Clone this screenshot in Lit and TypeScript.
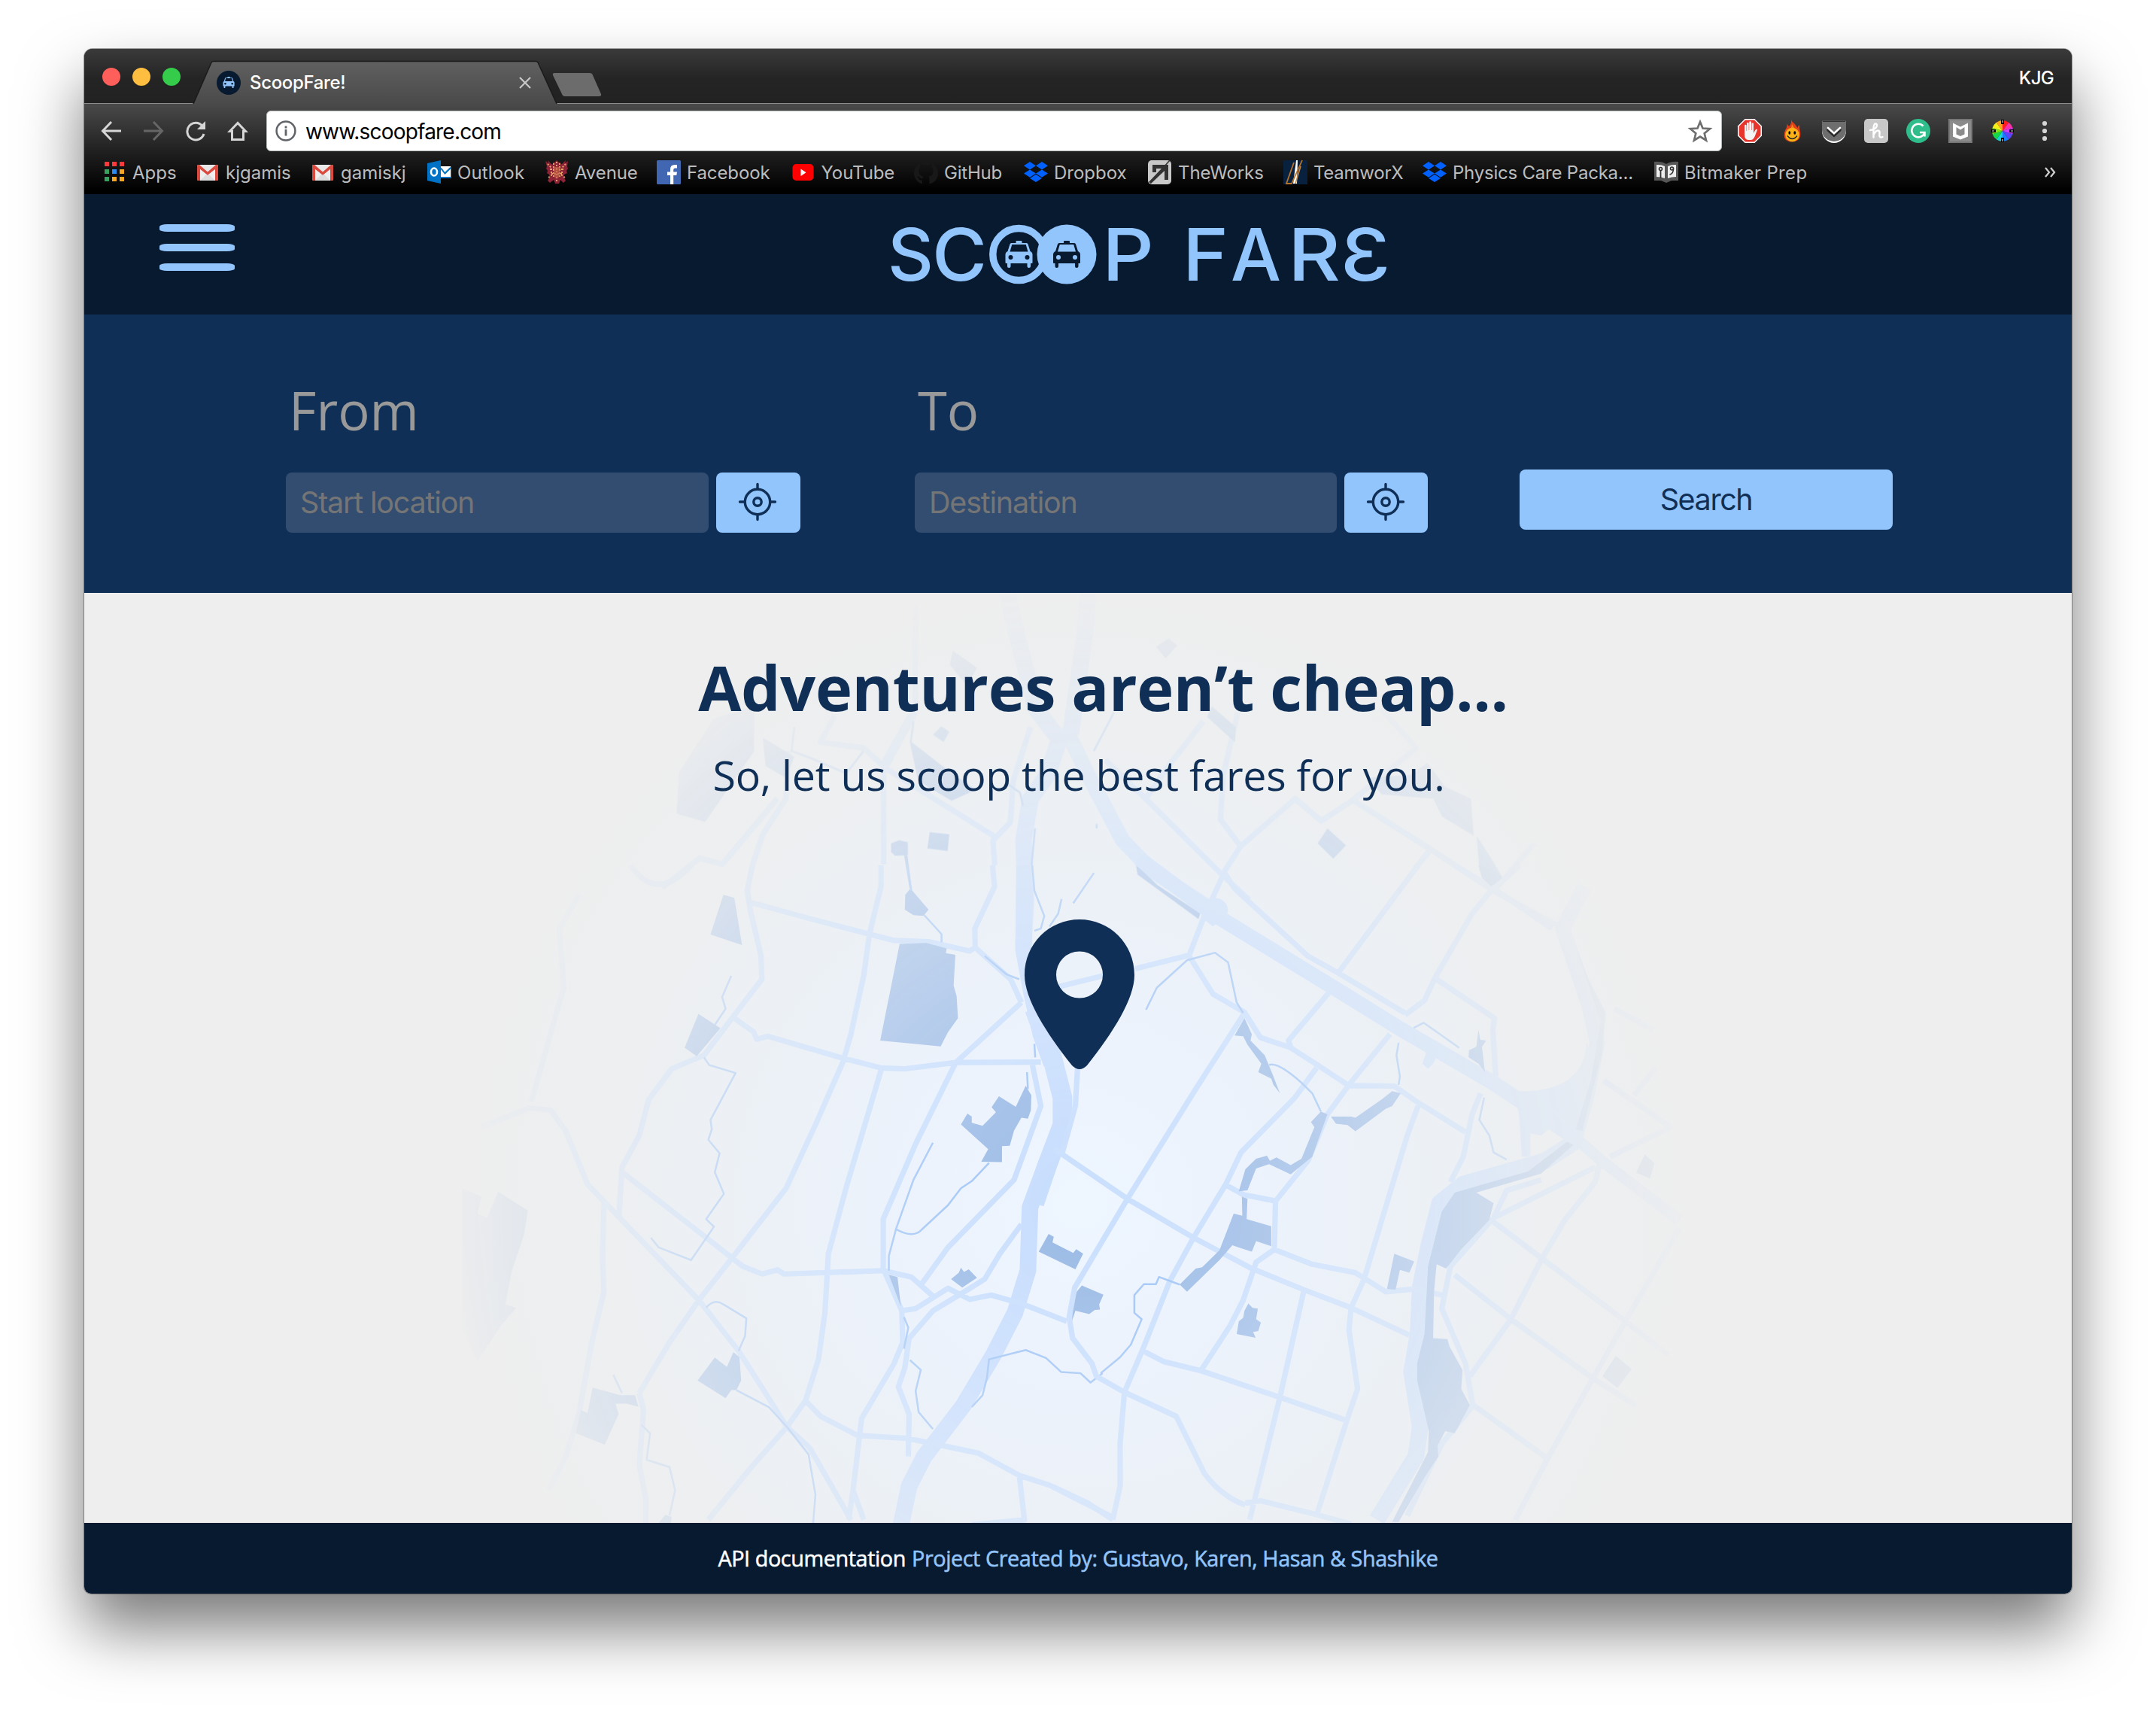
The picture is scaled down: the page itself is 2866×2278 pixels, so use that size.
import { LitElement, html, svg, css } from "lit";
import { customElement } from "lit/decorators.js";

const taxi = (body: string, glass: string) => svg`
  <path fill=${body} d="M14 3V1q0-1 1-1h6q1 0 1 1v2h6q1.600 0 2 1.500L33 14q3 1 3 4.500V29q0 1-1 1h-1.500v4q0 2-2.250 2T29 34v-4H7v4q0 2-2.250 2T2.500 34v-4H1q-1 0-1-1V18.500Q0 15 3 14L6 4.500Q6.400 3 8 3z"/>
  <path fill=${glass} d="M8.800 5h18.400L30 14.500H6z"/>
  <ellipse cx="7" cy="22" rx="3" ry="2.900" fill=${glass}/>
  <ellipse cx="29" cy="22" rx="3" ry="2.900" fill=${glass}/>`;

const dropbox = svg`<path fill="#0061ff" d="M8 2l8 5.200-8 5.200-8-5.200zM24 2l8 5.200-8 5.200-8-5.200zM8 12.400l8 5.200-8 5.200-8-5.200zM24 12.400l8 5.200-8 5.200-8-5.200zM16 18.800l8 5.200-8 5-8-5z"/>`;

const gmail = svg`
  <rect x="2" y="6" width="28" height="21" rx="2" fill="#e8e8e8"/>
  <path d="M6 27 16 18 26 27z" fill="#d4d4d4"/>
  <path d="M2 8v17q0 2 2 2h2V12l10 8 10-8v15h2q2 0 2-2V8q0-2-2-2h-1L16 15.500 5 6H4Q2 6 2 8z" fill="#db4a3f"/>
  <path d="M6 12v15h20V12l-10 8z" fill="#eee"/>
  <path d="M6 27 14 19l2 1.500 2-1.500 8 8z" fill="#ddd"/>`;

interface Bookmark { label: string; width: number; space: number; icon: unknown; }

const bookmarks: Bookmark[] = [
  { label: "Apps", width: 124, space: 0, icon: svg`
    <g><path fill="#fb3b3b" d="M3 2h6v6H3zM13 2h6v6h-6zM23 2h6v6h-6z"/>
    <path fill="#39a160" d="M3 12h6v6H3zM3 22h6v6H3z"/><path fill="#2a8cf2" d="M13 12h6v6h-6z"/>
    <path fill="#f5a623" d="M23 12h6v6h-6zM13 22h6v6h-6zM23 22h6v6h-6z"/></g>` },
  { label: "kjgamis", width: 153, space: 0, icon: gmail },
  { label: "gamiskj", width: 155, space: 0, icon: gmail },
  { label: "Outlook", width: 156, space: 0.15, icon: svg`
    <rect x="15" y="8" width="16" height="15" fill="#fff"/><path d="M17 10l7 5 8-7v16H17z" fill="#0072c6"/>
    <path d="M17 9h13l-6.500 6z" fill="#fff"/><path d="M18 9.500l6 5.500 7-6v13H18z" fill="#fff"/>
    <path d="M18 10.500l5.500 7L31 10" stroke="#0072c6" stroke-width="2" fill="none"/>
    <path d="M0 4 18 0v31L0 27z" fill="#0072c6"/><ellipse cx="9" cy="15.500" rx="4" ry="5" fill="none" stroke="#fff" stroke-width="2.600"/>` },
  { label: "Avenue", width: 149, space: -0.1, icon: svg`
    <path fill="#8e2236" d="M1 1l4 3-1-4 5 5 3 1-1-4 2 1 3-3 3 3 2-1-1 4 3-1 5-5-1 4 4-3-1 7 1 3-2 3 1 3-4 2-1 3 3 5-3 3-4-4-2 5h-5l-2-5-5 4-3-3 3-5-1-3-3-2 1-3-2-3 1-3z"/>
    <path stroke="#e2a06a" stroke-width="2" stroke-dasharray="2 2" fill="none" d="M4 5l5 5v10l-5 4M28 5l-5 5v10l5 4M12 4v20M20 4v20M16 2v28M7 12h18M9 18h14"/>
    <path fill="#c5634a" opacity=".7" d="M12 9h8v12l-4 4-4-4z"/>` },
  { label: "Facebook", width: 178.5, space: -0.1, icon: svg`
    <rect width="32" height="32" rx="1.500" fill="#4267b2"/>
    <path fill="#fff" d="M18 32V20h-4v-4.500h4V12q0-6 6-6h3v4.500h-2.500q-2.300 0-2.300 2.300v2.700H27l-.7 4.500h-4.100v12z"/>` },
  { label: "YouTube", width: 163.5, space: -0.1, icon: svg`
    <rect x="1.500" y="5" width="28" height="22" rx="5" fill="#f00"/><path d="M12.500 11.500v9.500l7-4.700z" fill="#fff"/>` },
  { label: "GitHub", width: 146, space: -0.2, icon: svg`
    <path fill="#181818" d="M16 1.500C7.500 1.500 0 8 0 17c0 7 4.500 12.500 11 14.500v-5c-3 .5-4.500-1-5.500-3.500l-1.500-2c2-.2 3 1 3.800 2.300 1 1.400 2.200 1.400 3.700.7.200-1.200.8-2 1.500-2.500-4-.5-6.500-2.500-6.500-7.500 0-2 .6-3.500 1.800-4.800-.3-1.200-.3-3 .3-4.600 1.600 0 3 .8 4.400 2q3-1 6 0c1.400-1.200 2.800-2 4.400-2 .6 1.600.6 3.400.3 4.600 1.200 1.300 1.800 2.800 1.800 4.800 0 5-2.500 7-6.500 7.500 1 .8 1.500 2 1.500 3.700v6.300C27.500 29.500 32 24 32 17c0-9-7.500-15.500-16-15.500z"/>` },
  { label: "Dropbox", width: 165, space: 0, icon: dropbox },
  { label: "TheWorks", width: 180, space: -0.1, icon: svg`
    <rect width="31" height="32" rx="5" fill="#c9c9c9"/><path d="M6 6h21v20h-5V14L4 31 1 29 18 11H11v5H6z" fill="#333"/><path d="M29 0 22 8" stroke="#333" stroke-width="1.500"/>` },
  { label: "TeamworX", width: 185, space: -0.25, icon: svg`
    <rect width="32" height="32" fill="#08213f"/><path d="M17 0 13 31h5l1-31z" fill="#fff"/>
    <path d="M14 3 4 31h7L25 0" fill="none" stroke="#b8742a" stroke-width="1.800"/><path d="M23 8 16 31" stroke="#c58a45" stroke-width="1.500"/>` },
  { label: "Physics Care Packa...", width: 308, space: -0.22, icon: dropbox },
  { label: "Bitmaker Prep", width: 300, space: 0.35, icon: svg`
    <path fill="#565656" d="M0 2q9-1 16 3 7-4 16-3v25h-9l-7 3-7-3H0z"/>
    <path fill="#eee" d="M3 6q6-.5 11 2v16q-5-2-11-2zM29 6q-6-.5-11 2v16q5-2 11-2z"/>
    <circle cx="8.500" cy="11.500" r="2" fill="none" stroke="#333" stroke-width="1.600"/><path d="M8.500 14v10" stroke="#333" stroke-width="1.800"/>
    <circle cx="23.500" cy="11" r="2" fill="none" stroke="#333" stroke-width="1.600"/><path d="M25.500 11q0 7-5 8" fill="none" stroke="#333" stroke-width="1.600"/>` },
];

const extensions = [
  svg`<path d="M9.500 0h13L32 9.500v13L22.500 32h-13L0 22.500v-13z" fill="#fff"/>
    <path d="M10 1.500h12l8.500 8.500v12L22 30.500H10L1.500 22V10z" fill="#e8352c"/>
    <path fill="#f4f4f4" d="M9 9q0-1.300 1.300-1.300T11.600 9v7h.5V6q0-1.300 1.300-1.300T14.700 6v9h.5V4.600q0-1.300 1.400-1.300T18 4.600V15h.5V6.500q0-1.300 1.200-1.300T21 6.500V19l2.200-4q1.500-2 3-1l-3.400 9q-2 5-5.500 5h-3Q9 28 9 21z"/>`,
  svg`<path fill="#e2401b" d="M15 1q1 5-3 9-2-2-2.500-4 .5 5-2.500 9-5 15 9 15.500Q29 30 27 17q-1-4-1-9-2 1-2.500 4Q21 8 19 6 16 4 15 1z"/>
    <path fill="#f58a1f" d="M16 7q0 5-5 10l10 1q-1-5-5-11z"/>
    <circle cx="16.500" cy="21" r="9.300" fill="#fbb118"/><ellipse cx="12.800" cy="18.500" rx="1.400" ry="2.200"/><ellipse cx="19.800" cy="18.500" rx="1.400" ry="2.200"/>
    <path d="M10 22.500q6.500 8 13 0" fill="none" stroke="#222" stroke-width="1.300"/>`,
  svg`<path d="M2 3h28q2 0 2 2v11a16 16 0 0 1-32 0V5q0-2 2-2z" fill="#fff"/><path d="M2 2h28q2 0 2 2v11a16 15 0 0 1-32 0V4q0-2 2-2z" fill="#6e6e6e"/>
    <path d="M1 3.300h30" stroke="#333" stroke-width="1.500"/><path d="M8.500 14.500l7.500 7 7.500-7" fill="none" stroke="#2a2a2a" stroke-width="4.500" stroke-linecap="round"/><path d="M8 12l8 7.300L24 12" fill="none" stroke="#fff" stroke-width="2.600" stroke-linecap="round"/>`,
  svg`<rect width="32" height="32" rx="5" fill="#c8c8c8"/><path d="M8 15q8-1 9-6 0-3-2.500-2.500Q12 8 12.500 18v6.500M12.700 21q3-6 6-5.500 2.500.5 1.800 4.500-1 6 4 4" fill="none" stroke="#fff" stroke-width="2.400" stroke-linecap="round"/>`,
  svg`<circle cx="16" cy="16" r="16" fill="#2fbd8b"/><path d="M22.500 9.500A8.800 8.800 0 1 0 24 19.500M18 18h6.500v5.500" fill="none" stroke="#fff" stroke-width="2.600"/>`,
  svg`<rect width="32" height="32" fill="#777"/><rect x="2" y="2" width="28" height="28" fill="#8b8b8b"/><path d="M6 5.500l10 5 10-5v18l-10 4-10-4zM10.500 11v9.500L16 23l5.500-2.500V11L16 14.500z" fill="#fff" fill-rule="evenodd"/>`,
];

const wheel = ["#ff1d1d", "#ff2fa8", "#d23cff", "#5a46ff", "#1a7bff", "#12d6d0", "#16d94a", "#7be814", "#f5ef19", "#ffa51c"];
const slice = (i: number) => {
  const a = (i * 36 - 90) * Math.PI / 180, b = ((i + 1) * 36 - 90) * Math.PI / 180;
  return `M16 16L${16 + 14 * Math.cos(a)} ${16 + 14 * Math.sin(a)}A14 14 0 0 1 ${16 + 14 * Math.cos(b)} ${16 + 14 * Math.sin(b)}z`;
};

const crosshair = html`<svg viewBox="-26 -26 52 52" width="52" height="52">
  <g fill="none" stroke="#0f2f57" stroke-width="3.400" stroke-linecap="round">
    <circle r="16.700"/><circle r="5.200"/><path d="M0-17v-6.500M0 17v6.500M-17 0h-6.500M17 0h6.500"/>
  </g></svg>`;

@customElement("browser-chrome")
export class BrowserChrome extends LitElement {
  static styles = css`
    :host { display: block; height: 193px; font-family: Inter, "Liberation Sans", sans-serif; background: #000; }
    svg { display: block; flex: none; overflow: visible; }
    .strip { display: flex; height: 72px; box-sizing: border-box; background: linear-gradient(#3a3a3a, #242424 55%, #222); border-top: 0; }
    .lights { display: flex; gap: 16px; padding: 25px 0 0 24px; width: 121px; }
    .light { width: 24px; height: 24px; border-radius: 50%; flex: none; }
    .red { background: #ff5f5a; }
    .amber { background: #ffbe40; }
    .green { background: #35cb4b; }
    .tab { position: relative; width: 483px; height: 57px; margin-top: 16px; display: flex; align-items: center; }
    .shape { position: absolute; left: 0; top: 0; }
    .favicon { position: relative; margin-left: 31px; }
    .title { position: relative; margin-left: 12px; color: #fff; font-size: 24px; letter-spacing: -0.35px; font-weight: 500; width: 361px; }
    .close { position: relative; margin-top: 1px; margin-left: -2px; }
    .plus { margin: 32px 0 0 -6px; }
    .user { margin: 23px 24px 0 auto; color: #fff; font-size: 24px; line-height: 32px; letter-spacing: -0.7px; font-weight: 500; }
    .toolbar { height: 121px; box-sizing: border-box; background: linear-gradient(#4a4a4a, #1e1e1e 55%, #000 96%); border-top: 1px solid #8c8c8c; }
    .nav { display: flex; height: 54px; padding: 9px 0 0 20px; align-items: center; }
    .buttons { display: flex; width: 222px; gap: 24px; align-items: center; }
    .url { display: flex; align-items: center; width: 1935px; height: 54px; box-sizing: border-box; background: #fff; border: 1px solid #b4b8b8; border-radius: 6px; padding-left: 11px; font-size: 28px; letter-spacing: -0.8px; }
    .address { margin: 1px 0 0 12px; flex: 1; }
    .star { margin-right: 10px; }
    .extensions { display: flex; gap: 24px; margin-left: 21px; }
    .dots { margin-left: 36px; }
    .bookmarks { display: flex; padding: 12px 22px 0 24px; height: 32px; align-items: center; color: #bdbdbd; font-size: 24px; }
    .bookmark { display: flex; align-items: center; gap: 8px; white-space: nowrap; flex: none; }
    .more { margin-left: auto; }
  `;

  render() {
    return html`
      <div class="strip">
        <div class="lights"><i class="light red"></i><i class="light amber"></i><i class="light green"></i></div>
        <div class="tab">
          <svg class="shape" width="483" height="57" viewBox="0 0 483 57">
            <defs><linearGradient id="tabfill" x2="0" y2="1"><stop stop-color="#606060"/><stop offset="1" stop-color="#4a4a4a"/></linearGradient></defs>
            <path d="M0 57 24 2Q25 .500 27 .500H455Q457 .500 458 2L483 57z" fill="url(#tabfill)"/>
            <path d="M0 57 24 2Q25 .500 27 .500H455Q457 .500 458 2L483 57" fill="none" stroke="#1a1a1a" stroke-width="1.500"/>
          </svg>
          <svg class="favicon" width="32" height="32" viewBox="-16 -16 32 32"><circle r="16" fill="#081a30"/><g transform="translate(-7.500 -8) scale(.42)">${taxi("#93c5fd", "#081a30")}</g></svg>
          <span class="title">ScoopFare!</span>
          <svg class="close" width="14" height="14" viewBox="0 0 14 14"><path d="M0 0 14 14M14 0 0 14" stroke="#c8c8c8" stroke-width="2.200"/></svg>
        </div>
        <svg class="plus" width="66" height="32" viewBox="0 0 66 32"><path d="M3 0H50Q53 0 54 3L65 28Q66 31 62 31H17Q14 31 13 28L1 3Q0 0 3 0z" fill="#6c6c6c"/></svg>
        <span class="user">KJG</span>
      </div>
      <div class="toolbar">
        <div class="nav">
          <div class="buttons">
            <svg width="32" height="32" viewBox="0 0 32 32"><path d="M29 16H5M16 4 4.500 16 16 28" fill="none" stroke="#d6d6d6" stroke-width="3"/></svg>
            <svg width="32" height="32" viewBox="0 0 32 32"><path d="M3 16H27M16 4 27.500 16 16 28" fill="none" stroke="#666" stroke-width="3"/></svg>
            <svg width="32" height="32" viewBox="0 0 32 32"><path d="M25 9.500A11.300 11.300 0 1 0 27 20" fill="none" stroke="#d6d6d6" stroke-width="3"/><path d="M29 3V14H18z" fill="#d6d6d6"/></svg>
            <svg width="32" height="32" viewBox="0 0 32 32"><path d="M16 5.500 5.500 16.500H8.500V27.500H23.500V16.500H26.500z" fill="none" stroke="#d6d6d6" stroke-width="3"/></svg>
          </div>
          <div class="url">
            <svg width="28" height="28" viewBox="0 0 28 28"><circle cx="14" cy="14" r="12.400" fill="none" stroke="#5f6368" stroke-width="2.500"/><path d="M14 12v8.500M14 7.500v3" stroke="#5f6368" stroke-width="2.800"/></svg>
            <span class="address">www.scoopfare.com</span>
            <svg class="star" width="36" height="32" viewBox="0 0 36 32"><path d="M18 4 21.500 12.500 31 13.200 23.700 19.200 26 28.500 18 23.500 10 28.500 12.300 19.200 5 13.200 14.500 12.500z" fill="none" stroke="#6e6e6e" stroke-width="2.700"/></svg>
          </div>
          <div class="extensions">
            ${extensions.map(e => html`<svg width="32" height="32" viewBox="0 0 32 32">${e}</svg>`)}
            <svg width="32" height="32" viewBox="0 0 32 32">
              ${wheel.map((c, i) => svg`<path d=${slice(i)} fill=${c}/>`)}
              <path d="M16 1v6M16 25v6M1 16h6M25 16h6" stroke="#000" stroke-width="4"/><path d="M16 2v3M16 27v3M2 16h3M27 16h3" stroke="#ddd" stroke-width="1.200"/>
            </svg>
          </div>
          <svg class="dots" width="8" height="28" viewBox="0 0 8 28"><circle cx="4" cy="4" r="3.100" fill="#d6d6d6"/><circle cx="4" cy="14" r="3.100" fill="#d6d6d6"/><circle cx="4" cy="24" r="3.100" fill="#d6d6d6"/></svg>
        </div>
        <div class="bookmarks">
          ${bookmarks.map(b => html`<div class="bookmark" style="width:${b.width}px;letter-spacing:${b.space}px">
            <svg width="32" height="32" viewBox="0 0 32 32">${b.icon}</svg><span>${b.label}</span></div>`)}
          <svg class="more" width="14" height="14" viewBox="0 0 14 14"><path d="M1 1 6 7 1 13M8 1 13 7 8 13" fill="none" stroke="#d0d0d0" stroke-width="2.200"/></svg>
        </div>
      </div>`;
  }
}

@customElement("city-map")
export class CityMap extends LitElement {
  static styles = css`
    :host { display: block; background: radial-gradient(circle 860px at 1323px 812px, #eef6ff 0%, #ecf3fd 22%, #ecf1f7 48%, #edeff1 72%, #eee 100%); }
    svg { display: block; }
    path { vector-effect: non-scaling-stroke; }
    .road { fill: none; stroke: #c8defd; stroke-width: 7.200px; stroke-linejoin: round; }
    .stream { fill: none; stroke: #9dc3f5; stroke-width: 2.500px; stroke-linejoin: round; }
    .river { fill: none; stroke: #c6dcfd; stroke-width: 22px; stroke-linejoin: round; }
    .broad { stroke-width: 26px; }
    .avenue { fill: none; stroke: #c8defd; stroke-width: 20px; stroke-linejoin: round; }
    .slim { stroke-width: 15px; }
    .water { fill: #c8defd; }
    .park { fill: #98b8e4; }
  `;

  render() {
    return html`<svg width="2642" height="1236" viewBox="112 788 2642 1236">
      <defs>
        <radialGradient id="fade" gradientUnits="userSpaceOnUse" cx="1435" cy="1600" r="850">
          <stop stop-color="#fff"/><stop offset=".25" stop-color="#c4c4c4"/><stop offset=".5" stop-color="#808080"/><stop offset=".8" stop-color="#303030"/><stop offset="1" stop-color="#000"/>
        </radialGradient>
        <mask id="vignette" maskUnits="userSpaceOnUse" x="112" y="788" width="2642" height="1236"><rect x="112" y="788" width="2642" height="1236" fill="url(#fade)"/></mask>
      </defs>
      <g mask="url(#vignette)">
        <g transform="translate(880 840) scale(.7653 .3954)" opacity=".88">
          <path class="river" d="M600 -130 615 0 650 260 690 360 670 480 640 560 628 700 632 900 628 1050"/>
          <path class="river" d="M740 -130 735 0 710 340"/>
          <path class="avenue" d="M700 320 740 480 800 700 850 800 960 940"/>
          <path class="road" d="M157 784 175 680 215 560 220 400M385 780V440L440 250V-100M300 280 275 370 350 390 390 460 580 690M390 450 440 270M640 320 610 500 605 640 575 700 578 784M200 560 105 780 65 760 0 860M940 300 880 450 840 560M770 430 840 560 975 820 1020 900M1000 270 975 480 970 630 1005 720 975 810M1005 720 1100 560 1145 635 1200 565 1335 730 1445 870 1568 1000M1200 565 1310 390 1250 260M1335 730 1308 796M1515 710 1445 870"/>
          <path class="park" d="M30 470 25 610 75 638 160 400V250L90 290zM465 673 499 680 496 736 461 727zM398 710 412 700 427 706V750L405 752 398 740zM1156 660 1188 717 1166 762 1139 710zM430 365 500 470 545 530 503 567 445 500zM485 317 499 335 489 369 471 345zM955 250 997 320 995 370 947 285zM505 62 547 120 530 180 500 110zM880 20 895 45 875 88 858 50zM1225 490 1300 480 1330 440 1360 520 1405 560 1410 685 1355 620 1340 560 1250 545zM1415 685 1440 760 1460 825 1442 855 1420 800zM175 355 230 420 215 490 180 450zM420 745h6l8 120-4-5zM823 780 860 850 935 945 932 965 826 815z"/>
          <path class="stream" d="M785 270 750 400M230 320 225 400 260 425 320 475 350 400M432 370 437 300M648 660 642 784M600 510 622 540 627 584M755 645v15"/>
        </g>
        <g transform="translate(580 1150) scale(.574 .5612)">
          <path class="river" d="M1362 0 1360 200 1378 300 1400 400 1425 470"/>
          <path class="river broad" d="M1385 340 1425 450 1450 550V615L1415 710 1385 800"/>
          <path class="river" d="M1415 700 1375 810 1370 960 1340 1060 1290 1160 1220 1280 1130 1400 1095 1470 1075 1568"/>
          <path class="road" d="M732 0 720 60 728 110 752 215 754 270 690 355 620 450 545 482 492 555 470 640 430 715 423 830M728 88 860 125 1003 163 1060 178 1140 181 1235 203 1248 195 1330 270 1355 325M1030 0V50L1003 163 990 260 960 400 942 465 880 610 810 765 685 930 608 1030 540 1130 470 1250M1288 0 1293 50 1247 150 1248 195M690 362 735 395 742 412 768 405 942 457 1030 480 1085 482 1203 467 1400 466M1355 325 1203 467 1110 660 1035 838V955M1030 485 950 760 908 920 900 1060 885 1170 855 1268 812 1330 730 1425 630 1550M428 725 600 862 710 950 755 968 790 958 805 968 1035 960 1100 975 1150 1020M105 620 215 575 265 580 300 630 350 755 420 830 608 1030 700 1150 812 1330 865 1380 960 1550M388 800 385 930 388 1010 360 1130 330 1300 300 1400 260 1480M470 1250 480 1290 470 1420 485 1500V1568M330 70 285 150 295 290 220 560M450 0Q510 90 590 0M1380 470 1400 570 1338 745 1185 905 1125 990M1078 1055 1110 1050 1185 1002 1235 1028 1285 1018 1355 1038 1460 1080M1355 850 1305 920 1270 980 1215 1015 1150 1055 1095 1120 1085 1190 1070 1235 1095 1300 1093 1400M1035 955 1078 1055 1080 1130 1060 1180 985 1310 965 1480 990 1550M965 1480 955 1550M855 1268 890 1305 975 1350 1090 1357 1175 1375 1255 1392 1350 1445 1420 1468 1568 1545M1350 1445 1362 1550 1240 1562M1485 480 1480 570 1450 680"/>
          <path class="park" d="M665 70 690 77 708 189 635 164zM607 352 658 386 603 452 575 432zM1073 186 1135 184 1182 197 1180 208 1202 212 1198 285 1205 310 1208 362 1185 395 1168 429 1028 415zM1098 55 1140 105 1128 120 1105 118 1085 105 1086 70zM1365 522 1378 545 1377 580 1370 600 1355 598 1338 628 1328 664 1310 665V703L1262 702 1278 672 1215 614 1230 588 1240 595V610L1265 617 1296 585 1286 573 1303 547 1342 572zM1418 873 1430 880 1427 893 1475 918 1482 909 1498 920 1480 957 1395 915zM1495 995 1545 1017 1535 1040 1537 1052 1525 1053 1512 1063 1480 1055 1472 1080 1475 1020zM1192 980 1210 965 1215 953 1222 963 1233 957 1252 977 1218 1000zM1048 970 1068 975 1076 1045zM605 1220 645 1166 673 1188 688 1153 702 1165 706 1220 695 1243H683L670 1262zM362 1237 425 1255 460 1255 468 1282 440 1275 415 1275 422 1300 390 1372 323 1345 335 1290 350 1297zM143 773 212 818 203 875 175 960 160 1040 185 1048 150 1090 95 1175 60 1100V765L105 785 95 825 118 835zM530 1538 545 1543 543 1563 515 1558z"/>
          <path class="stream" d="M683 262 662 312 670 340 645 378M620 455 632 473 693 492 635 603 638 625 630 650 656 682 645 727 666 778 625 838 643 856 590 935 515 905 497 882M1150 657 1105 745 1065 860 1048 925V960M1065 862Q1105 885 1125 862L1185 805 1215 765 1240 748 1280 705M1385 423 1387 455M1368 490 1370 530M625 1047Q645 1025 665 1040L718 1073 715 1115 700 1150M695 1243 770 1283 812 1330 862 1395 878 1490 872 1568M410 1207 430 1250M475 1325 495 1345 487 1408 540 1425 553 1480 540 1540M1083 1145 1093 1095 1083 1070M1097 1172 1122 1195 1110 1245 1117 1295 1150 1335M1240 1283 1265 1255 1275 1215 1280 1170 1365 1148 1412 1167 1447 1200 1492 1203 1515 1225 1543 1203M1270 215 1320 258 1350 270M1130 118 1170 163V182M1090 0 1100 60M1380 0 1385 60 1408 120 1400 150 1385 155M1448 80 1440 115 1420 145M1523 18 1475 90"/>
        </g>
        <g transform="translate(1400 1150) scale(.574 .5612)">
          <path class="avenue" d="M200 -15 370 115 650 290 800 385 1010 510 1100 570 1215 650"/>
          <path class="avenue slim" d="M1215 650 1270 700 1450 840"/>
          <path class="avenue" d="M1230 50 1180 150 1200 210 1240 330 1260 420 1235 550 1210 640"/>
          <path class="river" d="M1215 650 1140 700 950 755 895 800 870 900 850 1000 845 1110 830 1200 850 1330 840 1400 750 1550"/>
          <path class="water" d="M1070 535Q1230 540 1235 420L1260 470 1225 650 1180 655 1185 610 1155 575 1175 600 1130 640 1105 635 1105 690 1085 690 1080 600zM855 470 865 440 890 450 880 470 868 482zM345 100a30 28 0 1 1 55 20l-30 25-25-20z"/>
          <path class="road" d="M395 15 420 55 590 215 660 255 815 350M15 287 115 262M190 245 315 213 350 120 395 20M315 215 370 305 443 348 480 408 550 432 615 475 685 522 790 523 845 562 955 632M550 430 545 415 640 300M660 255 845 0M815 355 860 320 885 265 970 115 1010 65 1080 0M930 0 1020 55 1155 150M885 268 1022 362 1018 390 1025 500M780 400 685 520 635 590 590 700 515 795 512 910 470 940 440 1030 410 1090 342 1197M443 350 330 530 172 790 50 1000 37 1070 45 1120 90 1180 100 1210 165 1248 285 1305 350 1440Q390 1495 445 1515M0 670 172 790 325 882 460 955 580 1005 690 1048 825 1113M610 480 560 550 435 680 400 755 325 882 270 985 208 1145 165 1248 155 1370V1470L138 1550M400 757 440 780 515 795M512 910 600 945 700 965 770 1010 840 1003 900 1018M845 570 820 640 720 980 690 1048 685 1100 705 1240 680 1315 610 1540M208 1150 255 1175 342 1197 525 1260 680 1315M580 1010 525 1260 455 1550M445 1510 480 1505 600 1535 690 1560M0 1472 80 1510 138 1550M990 540 970 590 950 690 920 750M1265 710 1255 750 1185 840 1130 935 1060 1075 965 1210M1255 715 1020 835 920 950 900 1050 955 1180 972 1280 900 1370 820 1540M1020 845 1325 1080 1425 1160M930 970 1060 1075 1250 1215 1350 1280M975 1280 1145 1405 1070 1550M1450 860 1325 1080 1250 1215 1145 1405M1020 835 1050 770 1130 745M1300 340 1390 390M1275 510 1430 620 1290 690M1345 545 1395 480"/>
          <path class="park" d="M443 362 460 400 457 415 490 450 510 500 525 540 510 520 505 505 475 490 482 470 450 425 440 405 420 403zM805 540 785 570 770 577 700 630 682 615 655 612 643 595 690 595 700 598 760 555 785 535zM620 583 635 590 600 690 550 732 500 708 470 718 450 770 430 772 445 720 470 695 495 688 502 700 517 692 550 710 575 695 605 620 597 608zM437 785 450 790 448 838 505 855V902L470 890 460 915 430 905 415 900 385 935 310 1010 293 993 330 955 345 952 385 912 418 825 438 830zM452 1038 462 1048 474 1050 470 1075 481 1083 475 1103 463 1105 469 1119 425 1110 430 1080 440 1072 443 1055zM790 920 836 938 825 965 803 958 793 1005 773 1003zM980 775 1020 800 1010 840 945 910 910 955 888 945 882 1010 880 1120 913 1122 918 1140 948 1195 945 1240 965 1278 930 1345 908 1340 890 1375 892 1400 860 1450 800 1555H785L868 1390 870 1340 843 1220V1180L860 1110 868 950 900 820 930 775 1100 725 1190 655 1205 662 1130 730zM985 390 989 413 1003 415 993 430 1000 490 985 470 962 455 963 438 980 430zM1370 685 1393 705 1382 742 1350 728zM1303 1162 1340 1193 1307 1238 1272 1210zM985 0 1020 12 1040 30 1015 50 993 30z"/>
          <path class="park" opacity=".6" d="M1210 190 1240 270 1280 350 1270 450 1225 630 1210 625 1245 510 1268 370z"/>
          <path class="stream" d="M215 342 240 290 310 225 375 207 405 230 425 325 440 350M500 473Q520 465 575 515L600 540 620 583M800 420 795 450 803 500 800 520M835 385 858 373 940 432M998 550 987 603 1010 640 1020 680 1050 697M293 993 245 975 238 992 210 992 188 1018V1060L205 1075 180 1135 155 1165 110 1203"/>
        </g>
      </g>
    </svg>`;
  }
}

@customElement("app-root")
export class AppRoot extends LitElement {
  static styles = css`
    :host { display: block; box-sizing: border-box; width: 2866px; height: 2278px; padding: 65px 112px; background: #fff; overflow: hidden; }
    .window { display: flex; flex-direction: column; width: 2642px; height: 2053px; border-radius: 11px 11px 9px 9px; box-shadow: 0 0 0 1px rgba(0, 0, 0, .35), 0 46px 84px rgba(0, 0, 0, .53); }
    .clip { border-radius: inherit; overflow: hidden; display: flex; flex-direction: column; flex: 1; }
    .header { height: 160px; background: #081a30; display: flex; }
    .menu { display: flex; flex-direction: column; gap: 16px; width: 100px; padding: 40px 0 0 100px; }
    .bar { height: 10px; border-radius: 10px / 3px; background: #93c5fd; }
    .logo { margin: 38px 0 0 867px; overflow: visible; font-family: Inter, sans-serif; }
    .search { height: 370px; box-sizing: border-box; background: #0f2f57; display: flex; padding: 87px 0 0 268px; }
    .field { width: 684px; margin-right: 152px; }
    .label { font: 70.500px/80px "Open Sans", "Noto Sans", sans-serif; color: #999; padding-left: 4px; margin-bottom: 43px; }
    .row { display: flex; gap: 10px; }
    .input { width: 562px; height: 80px; box-sizing: border-box; border: 0; border-radius: 8px; background: #334d70; padding: 0 19px; margin: 0; font: 39.500px Inter, sans-serif; letter-spacing: -1.2px; color: #eee; }
    .input::placeholder { color: #757575; opacity: 1; }
    .locate, .go { display: grid; place-items: center; background: #93c5fd; border: 0; padding: 0; border-radius: 8px; height: 80px; }
    .locate { width: 112px; padding: 0 2px 3px 0; }
    .narrow .input { width: 561px; }
    .narrow .locate { width: 111px; }
    .narrow { width: 682px; margin-right: 122px; }
    .go { width: 496px; margin-top: 119px; font: 39.500px Inter, sans-serif; letter-spacing: -1.4px; color: #0f2f57; }
    .hero { position: relative; height: 1236px; background: #eee; color: #0f2f57; font-family: "Open Sans", "Noto Sans", sans-serif; display: flex; flex-direction: column; align-items: center; box-sizing: border-box; padding-top: 60px; }
    .map { position: absolute; inset: 0; }
    .title { position: relative; margin: 0 0 13px 67px; font-size: 83px; line-height: 129px; font-weight: 700; letter-spacing: -0.42px; white-space: nowrap; }
    .tagline { position: relative; margin: 0 0 152px 2px; font-size: 55.500px; line-height: 80px; letter-spacing: -0.26px; white-space: nowrap; }
    .pin { position: relative; margin-left: 4px; }
    .footer { height: 94px; padding-bottom: 2px; box-sizing: border-box; background: #081a30; display: flex; justify-content: center; align-items: center; gap: 8px; font: 28.800px "Open Sans", "Noto Sans", sans-serif; letter-spacing: -0.42px; -webkit-text-stroke: .5px; color: #93c5fd; }
    .api { color: #fff; }
  `;

  render() {
    return html`<div class="window"><div class="clip">
      <browser-chrome></browser-chrome>
      <div class="header">
        <div class="menu"><div class="bar"></div><div class="bar"></div><div class="bar"></div></div>
        <svg class="logo" width="664" height="84" viewBox="1179 296 664 84" font-size="96" font-weight="500" fill="#93c5fd" aria-label="Scoop Fare">
          <text x="1180" y="372.500" textLength="61" lengthAdjust="spacingAndGlyphs">S</text>
          <text x="1239" y="372.500" textLength="73" lengthAdjust="spacingAndGlyphs">C</text>
          <circle cx="1354.300" cy="338" r="34.500" fill="none" stroke="#93c5fd" stroke-width="9.500"/>
          <circle cx="1418" cy="338" r="39.500"/>
          <g transform="translate(1336.500 320)">${taxi("#93c5fd", "#081a30")}</g>
          <g transform="translate(1400 320)">${taxi("#081a30", "#93c5fd")}</g>
          <text x="1465" y="372.500" textLength="69" lengthAdjust="spacingAndGlyphs">P</text>
          <text x="1572" y="372.500" textLength="61" lengthAdjust="spacingAndGlyphs">F</text>
          <text x="1636" y="372.500" textLength="67" lengthAdjust="spacingAndGlyphs">A</text>
          <text x="1712" y="372.500" textLength="70" lengthAdjust="spacingAndGlyphs">R</text>
          <text x="1782" y="372.500" textLength="67" lengthAdjust="spacingAndGlyphs">Ɛ</text>
        </svg>
      </div>
      <div class="search">
        <div class="field">
          <div class="label">From</div>
          <div class="row"><input class="input" placeholder="Start location"><button class="locate">${crosshair}</button></div>
        </div>
        <div class="field narrow">
          <div class="label">To</div>
          <div class="row"><input class="input" placeholder="Destination"><button class="locate">${crosshair}</button></div>
        </div>
        <button class="go">Search</button>
      </div>
      <div class="hero">
        <city-map class="map"></city-map>
        <h1 class="title">Adventures aren’t cheap...</h1>
        <p class="tagline">So, let us scoop the best fares for you.</p>
        <svg class="pin" width="146" height="200" viewBox="0 0 146 200"><path fill="#0f2f57" fill-rule="evenodd" d="M73 0C113 0 146 32 146 74C146 105 118 150 83 194Q73 204 63 194C28 150 0 105 0 74C0 32 33 0 73 0zM73 42.500a31 31 0 1 0 0 62a31 31 0 1 0 0-62z"/></svg>
      </div>
      <div class="footer"><span class="api">API documentation</span><span>Project Created by: Gustavo, Karen, Hasan &amp; Shashike</span></div>
    </div></div>`;
  }
}
